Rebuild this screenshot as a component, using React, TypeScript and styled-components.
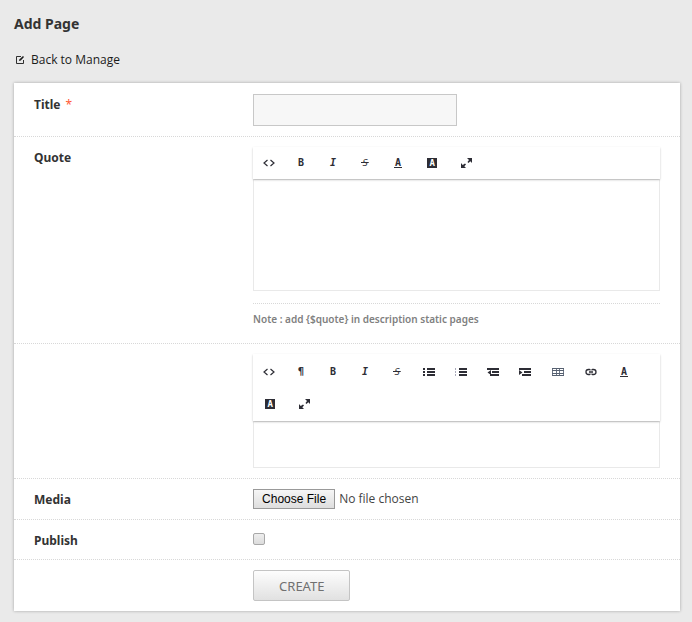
import React, { useId } from "react";
import styled, { createGlobalStyle } from "styled-components";

const Global = createGlobalStyle`
  *, *::before, *::after { box-sizing: border-box; }
  body {
    margin: 0;
    background: #eaeaea;
    color: #333;
    font: 12px/20px "Noto Sans", "Open Sans", sans-serif;
  }
`;

const Page = styled.main`
  padding: 14px 12px 11px 14px;
`;

const Heading = styled.h1`
  margin: 0 0 16px;
  font-size: 14px;
  line-height: 20px;
  font-weight: 700;
`;

const BackLink = styled.a`
  display: flex;
  width: fit-content;
  align-items: center;
  gap: 6px;
  padding-left: 1px;
  color: #1b1b1b;
  font-family: "Open Sans", "Noto Sans", sans-serif;
  text-decoration: none;
`;

const Card = styled.form`
  margin-top: 13px;
  background: #fff;
  box-shadow: 0 0 3px rgba(0, 0, 0, 0.3);
`;

const Row = styled.div`
  display: grid;
  grid-template-columns: 35% 65%;
  align-items: start;
  padding: 10px 20px;
  border-bottom: 1px dotted #d8d8d8;

  &:last-child {
    border-bottom: 0;
  }
`;

const TitleRow = styled(Row)`
  padding-top: 11px;
`;

const Label = styled.label`
  padding-top: 3px;
  font-size: 12px;
  line-height: 16px;
  font-weight: 700;
`;

const Required = styled.span`
  margin-left: 2px;
  color: #ff5a36;
  font-weight: 400;
`;

const Field = styled.div`
  grid-column: 2;
  min-width: 0;
`;

const TextInput = styled.input`
  display: block;
  width: 50%;
  height: 32px;
  padding: 4px 8px;
  border: 1px solid #c8c8c8;
  background: #f7f7f7;
  font: inherit;
  outline: none;
`;

const Toolbar = styled.div<{ $spaced?: boolean }>`
  position: relative;
  display: flex;
  flex-wrap: wrap;
  padding: ${(p) => (p.$spaced ? "2px 0 1px" : "0")};
  background: #fff;
  box-shadow: 0 1px 2px rgba(0, 0, 0, 0.22);
`;

const ToolButton = styled.button<{ $wide?: boolean }>`
  display: flex;
  align-items: center;
  justify-content: center;
  width: ${(p) => (p.$wide ? 34 : 32)}px;
  height: 32px;
  padding: 0 0 1px;
  border: 0;
  background: none;
  color: #2d2d35;
`;

const Glyph = styled.span<{ $italic?: boolean }>`
  font: ${(p) => (p.$italic ? "italic" : "normal")} 700 10px/12px "DejaVu Sans Mono", monospace;
`;

const Struck = styled(Glyph)`
  padding: 0 1px;
  background: linear-gradient(currentColor, currentColor) center / 100% 1px no-repeat;
  font-size: 9px;
  font-weight: 400;
`;

const Underlined = styled(Glyph)`
  width: 8px;
  line-height: 9px;
  text-align: center;
  border-bottom: 1px solid #2d2d35;
`;

const Boxed = styled(Glyph)`
  width: 10px;
  height: 10px;
  line-height: 10px;
  font-size: 9px;
  text-align: center;
  color: #fff;
  background: #2d2d35;
`;

const Editor = styled.textarea<{ $tall?: boolean }>`
  display: block;
  width: 100%;
  height: ${(p) => (p.$tall ? 112 : 47)}px;
  padding: 12px;
  border: 1px solid #e9e9e9;
  background: #fff;
  font: inherit;
  resize: none;
  outline: none;
`;

const Note = styled.p`
  margin: 12px 0 0;
  padding: 5px 0 4px;
  border-top: 1px dotted #d8d8d8;
  color: #808080;
  font-size: 10px;
  line-height: 20px;
  font-weight: 600;
`;

const FileInput = styled.input`
  display: block;
  width: 100%;
  height: 20px;
  color: #444;
  font: 12px/20px "Open Sans", "Noto Sans", sans-serif;

  &::file-selector-button {
    height: 20px;
    margin: 0 4px 0 0;
    padding: 0 8px;
    border: 1px solid #999;
    border-radius: 0;
    background: linear-gradient(#f6f6f6, #dedede);
    color: #000;
    font: 12px/16px "Liberation Sans", Arial, sans-serif;
  }
`;

const Checkbox = styled.input`
  display: block;
  appearance: none;
  width: 12px;
  height: 12px;
  margin: 3px 0 4px;
  border: 1px solid #a8a8a8;
  border-radius: 2px;
  background: linear-gradient(#eee, #dcdcdc);

  &:checked {
    background: #666;
  }
`;

const Submit = styled.button`
  display: block;
  height: 31px;
  padding: 0 25px;
  border: 1px solid #c4c4c4;
  border-radius: 2px;
  background: linear-gradient(#fdfdfd, #e1e1e1);
  color: #707070;
  font: 13px/20px "Noto Sans", "Open Sans", sans-serif;
`;

const Icon = ({ width = 12, children }: { width?: number; children: React.ReactNode }) => (
  <svg width={width} height="10" viewBox={`0 0 ${width} 10`} fill="none" stroke="currentColor" aria-hidden="true">
    {children}
  </svg>
);

const lines = <path d="M4 2h8M4 5h8M4 8h8" strokeWidth="1.800" />;
const indentLines = <path d="M0 2h12M5 5h7M3 8h9" strokeWidth="1.800" />;

type Tool = { name: string; wide?: boolean; icon: React.ReactNode };

const tools: Record<string, Tool> = {
  html: { name: "HTML", icon: <Icon><path d="M4.500 2 1 5l3.500 3M7.500 2 11 5 7.500 8" strokeWidth="1.200" /></Icon> },
  format: { name: "Formatting", icon: <Glyph>¶</Glyph> },
  bold: { name: "Bold", icon: <Glyph>B</Glyph> },
  italic: { name: "Italic", icon: <Glyph $italic>I</Glyph> },
  strike: { name: "Deleted", icon: <Struck $italic>S</Struck> },
  bullets: { name: "Unordered list", icon: <Icon>{lines}<path d="M0 2h2M0 5h2M0 8h2" strokeWidth="1.800" /></Icon> },
  numbers: { name: "Ordered list", icon: <Icon>{lines}<path d="M.5 1v2M.5 4v2M.5 7v2" stroke="#aab" /></Icon> },
  outdent: { name: "Outdent", icon: <Icon>{indentLines}<path d="M4 3v5L.500 5.500Z" fill="currentColor" stroke="none" /></Icon> },
  indent: { name: "Indent", icon: <Icon>{indentLines}<path d="M0 3v5l3.500-2.500Z" fill="currentColor" stroke="none" /></Icon> },
  table: { name: "Table", wide: true, icon: <Icon><path d="M.5 1v8M4.500 1v8M7.500 1v8M11.500 1v8" stroke="#6f7888" /><path d="M0 1.500h12M0 3.500h12M0 6.500h12M0 8.500h12" stroke="#566070" /></Icon> },
  link: { name: "Link", icon: <Icon><path d="M5.500 3.200 4.500 2.500h-1a2.500 2.500 0 0 0 0 5h1l1-.7M6.500 3.200l1-.7h1a2.500 2.500 0 0 1 0 5h-1l-1-.7M4 5h4" strokeWidth="1.300" /></Icon> },
  color: { name: "Font color", wide: true, icon: <Underlined>A</Underlined> },
  back: { name: "Back color", wide: true, icon: <Boxed>A</Boxed> },
  full: { name: "Fullscreen", wide: true, icon: <Icon width={11}><path d="M6 0h5v5L9.300 3.300 7.500 5 6.500 4 8 2ZM0 10h5L3.300 8.300 5 6.500 4 5.500 1.700 7 0 5Z" fill="currentColor" stroke="none" /></Icon> },
};

const ToolGroup = ({ keys, spaced }: { keys: string[]; spaced?: boolean }) => (
  <Toolbar role="toolbar" $spaced={spaced}>
    {keys.map((key) => (
      <ToolButton key={key} type="button" $wide={tools[key].wide} aria-label={tools[key].name}>
        {tools[key].icon}
      </ToolButton>
    ))}
  </Toolbar>
);

const quoteTools = ["html", "bold", "italic", "strike", "color", "back", "full"];
const bodyTools = ["html", "format", "bold", "italic", "strike", "bullets", "numbers", "outdent", "indent", "table", "link", "color", "back", "full"];

export default function App() {
  const id = useId();
  return (
    <Page>
      <Global />
      <Heading>Add Page</Heading>
      <BackLink href="#manage">
        <Icon width={10}>
          <path d="M6 1.500H1.500v7h7V5" strokeWidth=".9" />
          <path d="m4 6 .5-1.800L8 1l1 1-3.200 3.500Z" fill="currentColor" stroke="none" />
        </Icon>
        Back to Manage
      </BackLink>
      <Card onSubmit={(e) => e.preventDefault()}>
        <TitleRow>
          <Label htmlFor={`${id}-title`}>Title <Required>*</Required></Label>
          <Field><TextInput id={`${id}-title`} type="text" /></Field>
        </TitleRow>
        <Row>
          <Label htmlFor={`${id}-quote`}>Quote</Label>
          <Field>
            <ToolGroup keys={quoteTools} />
            <Editor id={`${id}-quote`} $tall />
            <Note>Note : add {"{$quote}"} in description static pages</Note>
          </Field>
        </Row>
        <Row>
          <Field>
            <ToolGroup keys={bodyTools} spaced />
            <Editor aria-label="Description" />
          </Field>
        </Row>
        <Row>
          <Label htmlFor={`${id}-media`}>Media</Label>
          <Field><FileInput id={`${id}-media`} type="file" /></Field>
        </Row>
        <Row>
          <Label htmlFor={`${id}-publish`}>Publish</Label>
          <Field><Checkbox id={`${id}-publish`} type="checkbox" /></Field>
        </Row>
        <Row>
          <Field><Submit type="submit">CREATE</Submit></Field>
        </Row>
      </Card>
    </Page>
  );
}
